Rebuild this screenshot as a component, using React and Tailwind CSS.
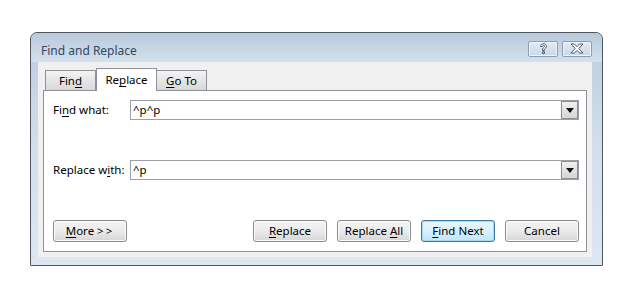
import React from "react";

const font = { fontFamily: '"Noto Sans", "Open Sans", sans-serif' };

function U({ children }) {
  return <span className="underline underline-offset-2 decoration-1">{children}</span>;
}

function Btn({ children, def, w = "w-[74px]" }) {
  return (
    <div
      className={`${w} h-[22px] rounded-[3px] border flex items-center justify-center text-[11.5px] text-black ${
        def
          ? "border-[#3d7ba3] bg-gradient-to-b from-[#eaf6fd] via-[#d9f0fc] to-[#bee6fd] shadow-[inset_0_0_0_1px_#a7d8f0]"
          : "border-[#8a8a8a] bg-gradient-to-b from-[#f4f4f4] via-[#ebebeb] to-[#d6d6d6] shadow-[inset_0_0_0_1px_#fcfcfc]"
      }`}
    >
      <span className="whitespace-pre">{children}</span>
    </div>
  );
}

function Combo({ value }) {
  return (
    <div className="flex-1 h-[20px] border border-[#9c9fa6] bg-white flex items-center">
      <div className="flex-1 pl-[2px] text-[11.5px] text-black leading-none">{value}</div>
      <div className="w-[17px] h-[18px] border border-[#8e8e8e] bg-gradient-to-b from-[#f0f0f0] to-[#d6d6d6] flex items-center justify-center">
        <svg width="8" height="5" viewBox="0 0 8 5">
          <path d="M0 0 H8 L4 5 Z" fill="#111" />
        </svg>
      </div>
    </div>
  );
}

function Tab({ children, active }) {
  return active ? (
    <div className="relative z-10 h-[23px] -mb-px w-[61px] border border-b-0 border-[#8e9199] bg-white flex items-center justify-center text-[11.5px] text-black">
      <span>{children}</span>
    </div>
  ) : (
    <div className="mt-[2px] h-[20px] w-[51px] border border-b-0 border-[#8e9199] bg-gradient-to-b from-[#f3f3f3] to-[#d9d9d9] flex items-center justify-center text-[11.5px] text-black -ml-px first:ml-0">
      <span>{children}</span>
    </div>
  );
}

export default function App() {
  return (
    <div className="w-[629px] h-[290px] bg-white pt-[32px] pl-[30px]" style={font}>
      <div className="w-[573px] h-[234px] border border-[#4f5660] rounded-t-[7px] rounded-b-[1px] bg-gradient-to-b from-[#bccbdc] via-[#d3dfeb] to-[#dce7f2] flex flex-col">
        {/* title bar */}
        <div className="h-[29px] flex items-center pl-[10px] pr-[10px] rounded-t-[6px] bg-gradient-to-b from-[#b9c9db] to-[#d4e0ec]">
          <div className="flex-1 text-[12px] text-[#34465c] pt-[6px]">Find and Replace</div>
          <div className="flex gap-[4px] mt-[2px]">
            <div className="w-[30px] h-[16px] rounded-[2px] border border-[#8c9db3] bg-gradient-to-b from-[#e3ecf5] to-[#c9d7e6] shadow-[inset_0_0_0_1px_#eef4fa] flex items-center justify-center">
              <svg width="9" height="12" viewBox="0 0 9 12">
                <path d="M1.5 3.5 C1.5 1.5 3 0.8 4.5 0.8 C6.3 0.8 7.5 2 7.5 3.3 C7.5 4.8 6 5.3 5.4 6.2 L5.4 7.4 L3.6 7.4 L3.6 5.8 C4.2 4.6 5.6 4.3 5.6 3.3 C5.6 2.7 5.1 2.4 4.5 2.4 C3.8 2.4 3.4 2.9 3.4 3.5 Z M3.6 8.6 H5.4 V10.6 H3.6 Z" fill="#fff" stroke="#3e4d63" strokeWidth="0.9" />
              </svg>
            </div>
            <div className="w-[30px] h-[16px] rounded-[2px] border border-[#8c9db3] bg-gradient-to-b from-[#e3ecf5] to-[#c9d7e6] shadow-[inset_0_0_0_1px_#eef4fa] flex items-center justify-center">
              <svg width="14" height="11" viewBox="0 0 14 11">
                <path d="M1 1 H4.5 L7 3.6 L9.5 1 H13 L8.8 5.5 L13 10 H9.5 L7 7.4 L4.5 10 H1 L5.2 5.5 Z" fill="#fff" stroke="#3e4d63" strokeWidth="0.9" strokeLinejoin="round" />
              </svg>
            </div>
          </div>
        </div>
        {/* client */}
        <div className="flex-1 ml-[7px] mr-[10px] mb-[8px] bg-[#f0f0f0] pt-[6px] pl-[5px] pr-[5px] flex flex-col">
          <div className="flex items-end pl-[2px] h-[22px]">
            <Tab>
              Fin<U>d</U>
            </Tab>
            <Tab active>
              Re<U>p</U>lace
            </Tab>
            <Tab>
              <U>G</U>o To
            </Tab>
          </div>
          <div className="h-[162px] border border-[#8e9199] bg-white pl-[9px] pr-[7px] pt-[9px] flex flex-col">
            <div className="flex items-center">
              <div className="w-[77px] text-[11.5px] text-black">
                <span>
                  Fi<U>n</U>d what:
                </span>
              </div>
              <Combo value="^p^p" />
            </div>
            <div className="flex items-center mt-[40px]">
              <div className="w-[77px] text-[11.5px] text-black">
                <span>
                  Replace w<U>i</U>th:
                </span>
              </div>
              <Combo value="^p" />
            </div>
            <div className="flex items-center mt-[40px]">
              <Btn>
                <U>M</U>ore <span className="tracking-[2px]">&gt;&gt;</span>
              </Btn>
              <div className="flex-1" />
              <div className="flex gap-[10px]">
                <Btn>
                  <U>R</U>eplace
                </Btn>
                <Btn>
                  {"Replace "}
                  <U>A</U>ll
                </Btn>
                <Btn def>
                  <U>F</U>ind Next
                </Btn>
                <Btn>Cancel</Btn>
              </div>
            </div>
          </div>
        </div>
      </div>
    </div>
  );
}
